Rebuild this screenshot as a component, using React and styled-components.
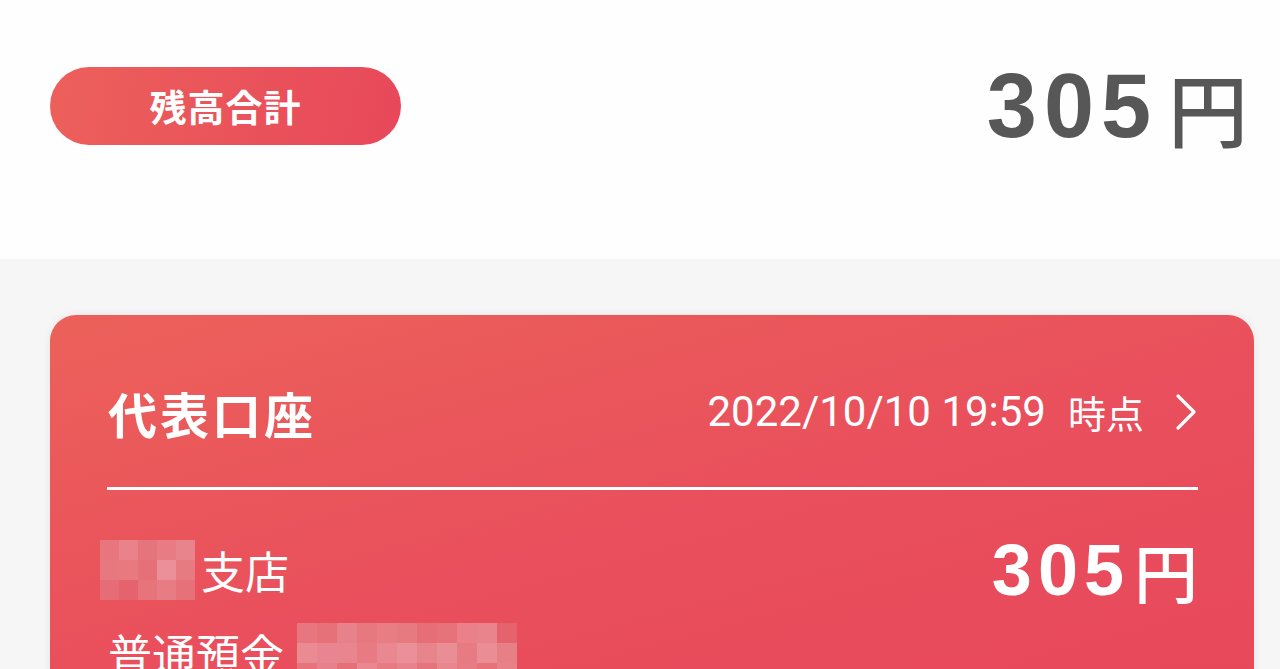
import React from "react";
import styled, { createGlobalStyle } from "styled-components";

const Global = createGlobalStyle`
  html, body { margin: 0; padding: 0; background: #f6f6f6; }
  body { font-family: "Noto Sans CJK JP", sans-serif; overflow: hidden; }
`;

const Page = styled.div`
  width: 1280px;
  height: 669px;
  overflow: hidden;
  display: flex;
  flex-direction: column;
`;

const TopSection = styled.section`
  flex-shrink: 0;
  height: 259px;
  box-sizing: border-box;
  background: #fefefe;
  padding: 67px 32px 0 50px;
  display: flex;
  justify-content: space-between;
  align-items: flex-start;
`;

const Pill = styled.div`
  width: 351px;
  height: 78px;
  border-radius: 39px;
  background: linear-gradient(100deg, #ec605b 0%, #e8485a 100%);
  display: flex;
  align-items: center;
  justify-content: center;
  color: #fff;
  font-family: "Noto Sans CJK JP", sans-serif;
  font-weight: 700;
  font-size: 37px;
  letter-spacing: 1px;
  line-height: 1;
`;

const Amount = styled.div`
  display: flex;
  align-items: center;
  height: ${(p) => p.$h}px;
  color: ${(p) => p.$color};
  font-family: "Liberation Sans", "Noto Sans CJK JP", sans-serif;
  font-weight: 700;
  line-height: 1;
`;

const Digits = styled.span`
  font-size: ${(p) => p.$size}px;
  letter-spacing: ${(p) => p.$ls}px;
`;

const Yen = styled.span`
  font-family: "Noto Sans CJK JP", sans-serif;
  font-weight: ${(p) => p.$w};
  font-size: ${(p) => p.$size}px;
  margin-left: ${(p) => p.$ml}px;
`;

const Body = styled.section`
  flex: 1;
  min-height: 0;
  overflow: hidden;
  background: #f6f6f6;
  padding: 56px 26px 0 50px;
`;

const Card = styled.div`
  background: linear-gradient(165deg, #ec615a 0%, #e94f5c 45%, #e7465b 100%);
  border-radius: 26px;
  box-shadow: 0 0 8px rgba(0, 0, 0, 0.07);
  padding: 68px 56px 40px 58px;
  color: #fff;
  height: 500px;
  box-sizing: border-box;
`;

const HeaderRow = styled.div`
  display: flex;
  justify-content: space-between;
  align-items: center;
  height: 58px;
`;

const Title = styled.div`
  font-family: "Noto Sans CJK JP", sans-serif;
  font-weight: 700;
  font-size: 49px;
  line-height: 1;
  letter-spacing: 3px;
`;

const Stamp = styled.div`
  display: flex;
  align-items: center;
`;

const DateText = styled.span`
  font-family: Roboto, "Noto Sans CJK JP", sans-serif;
  font-weight: 400;
  font-size: 42px;
  line-height: 1;
`;

const AtText = styled.span`
  font-family: "Noto Sans CJK JP", sans-serif;
  font-weight: 400;
  font-size: 38px;
  margin-left: 22px;
  line-height: 1;
`;

const Chevron = styled.svg`
  margin-left: 30px;
  width: 24px;
  height: 38px;
  display: block;
`;

const Divider = styled.div`
  height: 3px;
  background: #fff;
  margin: 46px 0 0 -1px;
`;

const Row = styled.div`
  display: flex;
  justify-content: space-between;
  align-items: center;
  margin-top: ${(p) => p.$mt}px;
  height: 60px;
`;

const Label = styled.div`
  display: flex;
  align-items: center;
  font-family: "Noto Sans CJK JP", sans-serif;
  font-weight: 400;
  font-size: 44px;
  line-height: 1;
`;

const Mosaic = styled.div`
  display: grid;
  grid-template-columns: repeat(${(p) => p.$cols}, ${(p) => p.$cell}px);
  grid-auto-rows: 20px;
  margin-left: ${(p) => p.$ml}px;
  margin-right: ${(p) => p.$mr}px;
  align-self: ${(p) => p.$align};
`;

const Cell = styled.div`
  background: ${(p) => p.$c};
`;

const m1 = [
  "#e7767e", "#e9828a", "#e6747c", "#e87b83", "#e8848c",
  "#e87880", "#e8797f", "#e67078", "#eb9099", "#e87a82",
  "#e66c75", "#e5636c", "#e7737b", "#e87c84", "#e67179",
];

const m2 = [
  "#e8767e", "#e77178", "#e8828a", "#e87880", "#e97d85", "#e77a81", "#e56e77", "#e77279", "#e9808a", "#e9848c", "#e5636c",
  "#ea8a93", "#e98590", "#e8858e", "#e77a82", "#e98890", "#eb8f98", "#e8848c", "#ea8e96", "#e67b83", "#ea8d95", "#e77f87",
  "#e7737b", "#e8828a", "#e67078", "#e98890", "#e77a82", "#e8838b", "#e6747c", "#e9868e", "#e87c84", "#e77279", "#e8818a",
];

export default function App() {
  return (
    <Page>
      <Global />
      <TopSection>
        <Pill>残高合計</Pill>
        <Amount $h={78} $color="#575757">
          <Digits $size={90} $ls={7}>305</Digits>
          <Yen $size={80} $w={500} $ml={10}>円</Yen>
        </Amount>
      </TopSection>
      <Body>
        <Card>
          <HeaderRow>
            <Title>代表口座</Title>
            <Stamp>
              <DateText>2022/10/10 19:59</DateText>
              <AtText>時点</AtText>
              <Chevron viewBox="0 0 24 38">
                <path d="M4 3 L20 19 L4 35" fill="none" stroke="#fff" strokeWidth="3.2" strokeLinecap="round" strokeLinejoin="round" />
              </Chevron>
            </Stamp>
          </HeaderRow>
          <Divider />
          <Row $mt={50}>
            <Label>
              <Mosaic $cols={5} $cell={19} $ml={-8} $mr={6} $align="center">
                {m1.map((c, i) => (
                  <Cell key={i} $c={c} />
                ))}
              </Mosaic>
              支店
            </Label>
            <Amount $h={60} $color="#fff">
              <Digits $size={72} $ls={6}>305</Digits>
              <Yen $size={64} $w={500} $ml={4}>円</Yen>
            </Amount>
          </Row>
          <Row $mt={23}>
            <Label>
              普通預金
              <Mosaic $cols={11} $cell={20} $ml={13} $mr={0} $align="flex-start">
                {m2.map((c, i) => (
                  <Cell key={i} $c={c} />
                ))}
              </Mosaic>
            </Label>
          </Row>
        </Card>
      </Body>
    </Page>
  );
}
